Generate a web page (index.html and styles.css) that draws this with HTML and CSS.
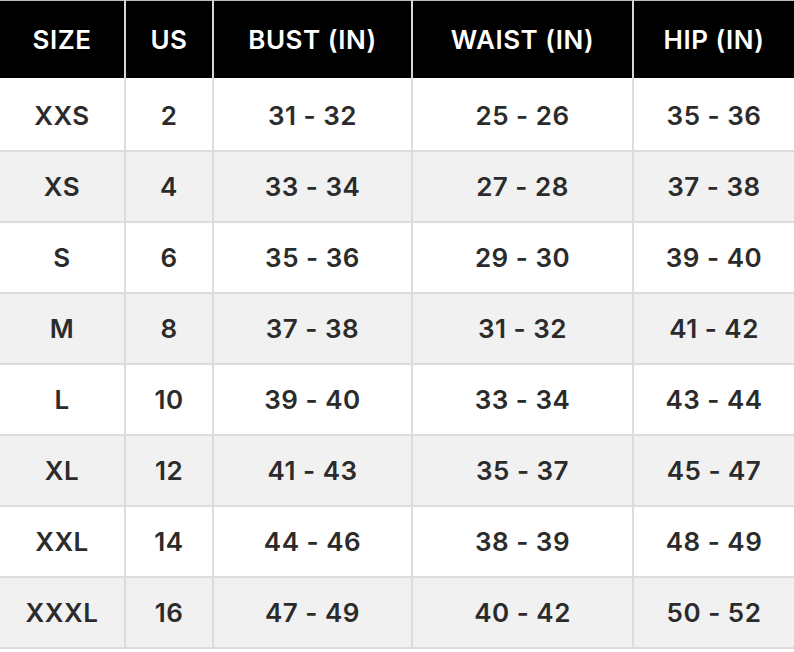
FILE: index.html
```html
<!DOCTYPE html>
<html>
<head>
<meta charset="utf-8">
<link rel="stylesheet" href="styles.css">
</head>
<body>
<table class="chart">
  <colgroup>
    <col class="c-size"><col class="c-us"><col class="c-bust"><col class="c-waist"><col class="c-hip">
  </colgroup>
  <thead>
    <tr><th>SIZE</th><th>US</th><th>BUST (IN)</th><th>WAIST (IN)</th><th>HIP (IN)</th></tr>
  </thead>
  <tbody>
    <tr class="first"><td>XXS</td><td>2</td><td>31 - 32</td><td>25 - 26</td><td>35 - 36</td></tr>
    <tr><td>XS</td><td>4</td><td>33 - 34</td><td>27 - 28</td><td>37 - 38</td></tr>
    <tr><td>S</td><td>6</td><td>35 - 36</td><td>29 - 30</td><td>39 - 40</td></tr>
    <tr><td>M</td><td>8</td><td>37 - 38</td><td>31 - 32</td><td>41 - 42</td></tr>
    <tr><td>L</td><td>10</td><td>39 - 40</td><td>33 - 34</td><td>43 - 44</td></tr>
    <tr><td>XL</td><td>12</td><td>41 - 43</td><td>35 - 37</td><td>45 - 47</td></tr>
    <tr><td>XXL</td><td>14</td><td>44 - 46</td><td>38 - 39</td><td>48 - 49</td></tr>
    <tr><td>XXXL</td><td>16</td><td>47 - 49</td><td>40 - 42</td><td>50 - 52</td></tr>
  </tbody>
</table>
</body>
</html>
```

FILE: styles.css
```css
html, body {
  margin: 0;
  padding: 0;
  background: #ffffff;
}
.chart {
  width: 794px;
  border-collapse: collapse;
  table-layout: fixed;
  font-family: Inter, "Noto Sans", sans-serif;
  font-weight: 600;
  font-size: 26px;
  letter-spacing: 0.5px;
  text-align: center;
  border-top: 1px solid #bdbdbd;
}
.c-size { width: 125px; }
.c-us { width: 88px; }
.c-bust { width: 199px; }
.c-waist { width: 221px; }
.c-hip { width: 161px; }
.chart th {
  background: #000000;
  color: #ffffff;
  height: 77px;
  padding: 0;
  border-left: 2px solid #d6d6d6;
  font-weight: 600;
}
.chart td {
  color: #2b2b2b;
  height: 69px;
  padding: 0;
  border-left: 2px solid #dcdcdc;
  border-bottom: 2px solid #dcdcdc;
}
.chart tr.first td {
  height: 70px;
  padding-top: 2px;
}
.chart th:first-child, .chart td:first-child {
  border-left: none;
}
.chart tbody tr:nth-child(even) td {
  background: #f1f1f1;
}
```
